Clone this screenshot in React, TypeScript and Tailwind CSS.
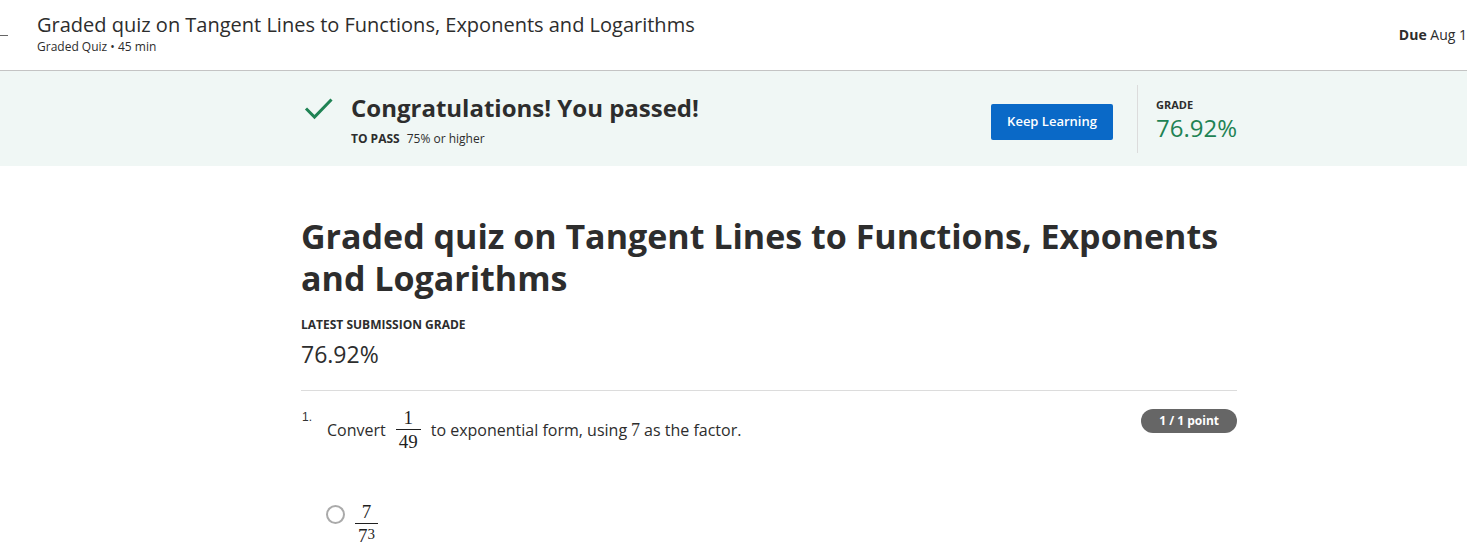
import React from "react";

const sans = { fontFamily: '"Open Sans", "Noto Sans", sans-serif' };
const serif = { fontFamily: '"Liberation Serif", "DejaVu Serif", serif' };

const Fraction = ({ top, bottom }: { top: React.ReactNode; bottom: React.ReactNode }) => (
  <span className="mx-[10px] inline-flex flex-col items-center align-middle text-[19px] leading-[22px] text-[#1f1f1f]" style={serif}>
    <span className="px-[3px]">{top}</span>
    <span className="w-full border-t border-[#1f1f1f] px-[3px] pt-[1px]">{bottom}</span>
  </span>
);

const Header = () => (
  <header className="relative flex h-[71px] items-start justify-between border-b border-[#c4c4c4] bg-white">
    <span className="absolute left-0 top-[35px] h-px w-[8px] bg-[#666]" />
    <div className="pl-[37px] pt-[12px]">
      <h2 className="text-[20px] leading-[26px] text-[#2d2d2d]">
        Graded quiz on Tangent Lines to Functions, Exponents and Logarithms
      </h2>
      <p className="text-[12px] leading-[18px] text-[#2d2d2d]">Graded Quiz • 45 min</p>
    </div>
    <div className="whitespace-nowrap pt-[24px] text-[14px] text-[#2d2d2d]">
      <span className="font-bold">Due</span> Aug 1
    </div>
  </header>
);

const Banner = () => (
  <section className="bg-[#f0f7f5]">
    <div className="ml-[301px] flex h-[95px] w-[936px] items-center">
      <div className="flex flex-1 items-start gap-[16px] pt-[2px]">
        <svg width="32" height="32" viewBox="0 0 32 32" className="mt-[-1px] ml-[2px]">
          <path d="M3 16.5 L11.5 25 L28.5 7.5" fill="none" stroke="#1f8354" strokeWidth="3" />
        </svg>
        <div>
          <h3 className="text-[24px] font-bold leading-[30px] text-[#2d2d2d]">Congratulations! You passed!</h3>
          <p className="mt-[9px] text-[12px] leading-[14px] text-[#2d2d2d]">
            <span className="mr-[7px] font-bold">TO PASS</span>75% or higher
          </p>
        </div>
      </div>
      <button className="mr-[24px] mt-[6px] h-[36px] w-[122px] rounded-[2px] bg-[#0a69c7] text-[13px] font-semibold text-white">
        Keep Learning
      </button>
      <div className="h-[68px] w-px bg-[#dcdcdc]" />
      <div className="w-[99px] pl-[18px] pt-[3px]">
        <p className="text-[11px] font-bold leading-[14px] text-[#2d2d2d]">GRADE</p>
        <p className="mt-[1px] text-[24px] leading-[30px] text-[#1f8354]">76.92%</p>
      </div>
    </div>
  </section>
);

const Main = () => (
  <main className="ml-[301px] w-[936px] pt-[49px]">
    <h1 className="text-[34px] font-bold leading-[42px] text-[#2d2d2d]">
      Graded quiz on Tangent Lines to Functions, Exponents and Logarithms
    </h1>
    <p className="mt-[19px] text-[12px] font-bold leading-[14px] text-[#2d2d2d]">LATEST SUBMISSION GRADE</p>
    <p className="mt-[7px] text-[23px] leading-[30px] text-[#2d2d2d]">76.92%</p>
    <hr className="mt-[21px] border-[#dcdcdc]" />
    <div className="mt-[16px] flex items-start justify-between">
      <div className="flex items-start">
        <span className="mt-[1px] w-[26px] pl-px text-[12px] text-[#333]" style={{ fontFamily: '"Liberation Sans", sans-serif' }}>1.</span>
        <p className="flex items-center text-[16px] text-[#2d2d2d]">
          Convert
          <Fraction top="1" bottom="49" />
          to exponential form, using <span className="mx-[4px] text-[18px]" style={serif}>7</span> as the factor.
        </p>
      </div>
      <span className="mt-[2px] rounded-full bg-[#666] px-[18px] text-[12px] font-bold leading-[24px] text-white">1 / 1 point</span>
    </div>
    <div className="mt-[48px] flex items-start pl-[25px]">
      <span className="mt-[4px] h-[19px] w-[19px] rounded-full border-2 border-[#aaa] bg-white" />
      <Fraction top="7" bottom={<>7<sup className="relative top-[-3px] text-[15px]">3</sup></>} />
    </div>
  </main>
);

export default function App() {
  return (
    <div className="h-[544px] overflow-hidden bg-white" style={sans}>
      <Header />
      <Banner />
      <Main />
    </div>
  );
}
